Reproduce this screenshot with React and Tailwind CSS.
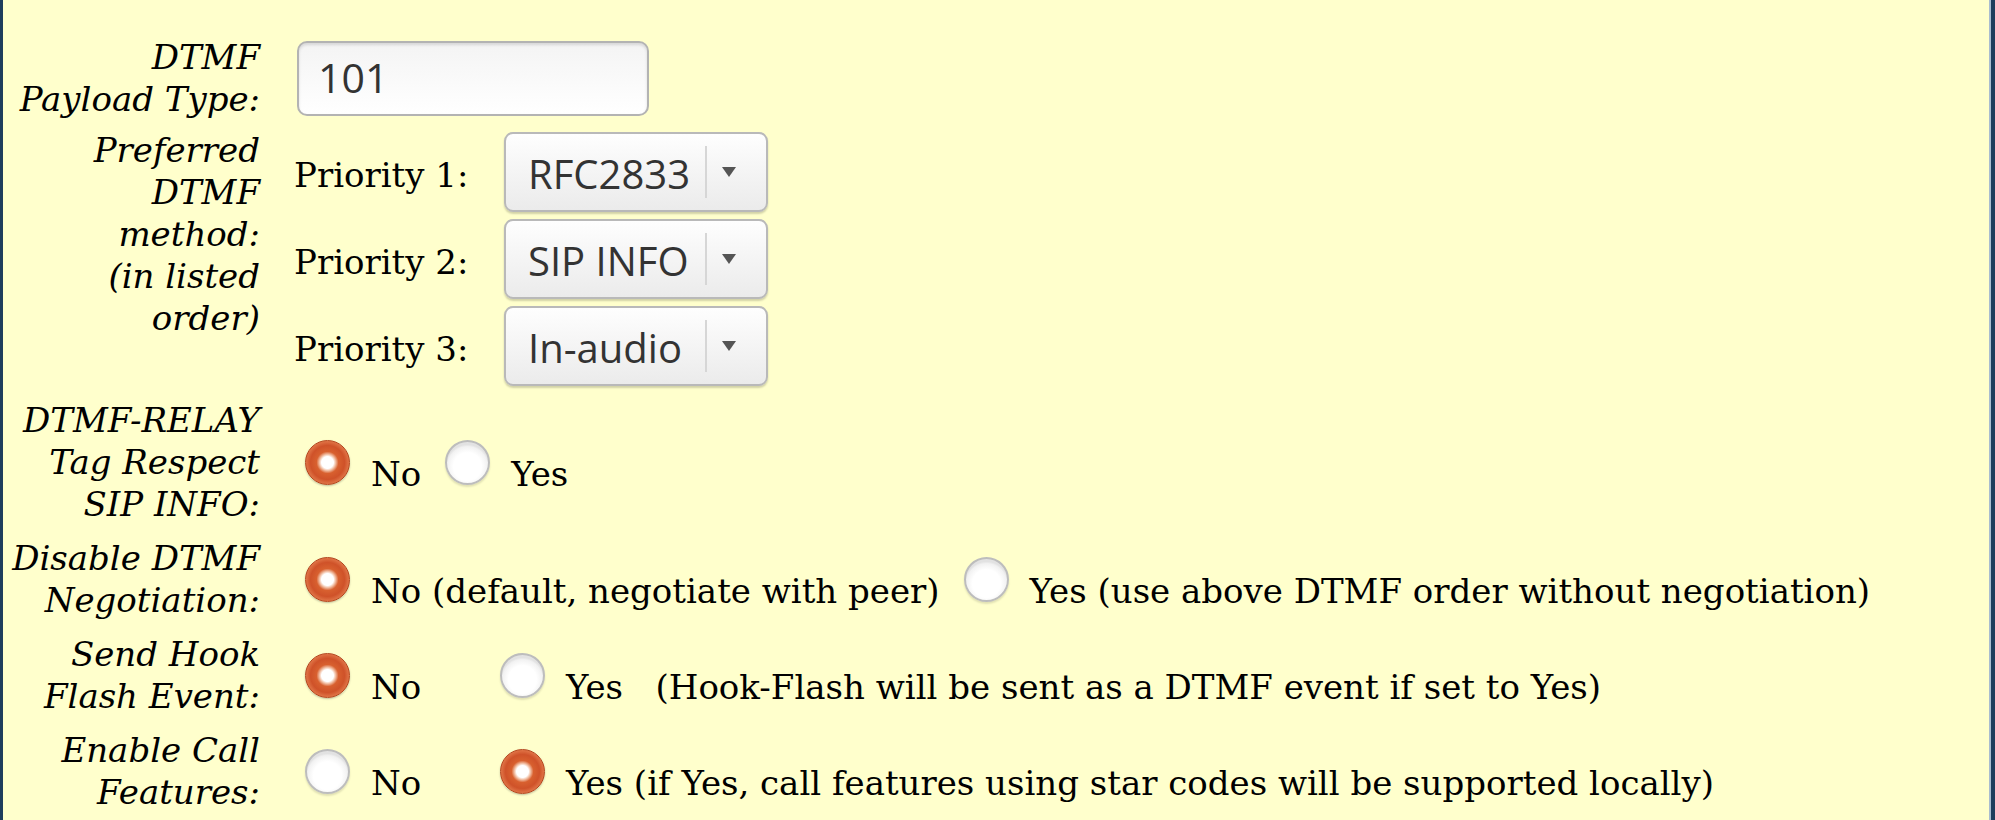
import React from "react";

const serif = { fontFamily: '"DejaVu Serif", serif' };
const sans = { fontFamily: '"Open Sans", "Noto Sans", sans-serif' };

function Radio({ checked }) {
  if (checked) {
    return (
      <span className="relative flex h-[45px] w-[45px] shrink-0 items-center justify-center rounded-full border border-[#b4461f] bg-[radial-gradient(circle_at_50%_50%,#ffffff_0,#ffffff_6px,#f2c2a8_8px,#d8602f_11px,#cf5229_17px,#e2784a_22px)] shadow-[0_1px_2px_rgba(0,0,0,0.25)]" />
    );
  }
  return (
    <span className="flex h-[45px] w-[45px] shrink-0 rounded-full border-2 border-[#bdbdbd] bg-[radial-gradient(circle_at_50%_60%,#ffffff_0,#ffffff_14px,#f2f2f2_20px,#e2e2e2_22px)] shadow-[0_2px_2px_rgba(0,0,0,0.12)]" />
  );
}

function Option({ checked, children, className = "" }) {
  return (
    <div className={"flex items-start " + className}>
      <Radio checked={checked} />
      <span className="ml-[21px] mt-[13px] whitespace-pre text-[34px] leading-[42px] text-black" style={serif}>
        {children}
      </span>
    </div>
  );
}

function Label({ children }) {
  return (
    <div
      className="w-[257px] shrink-0 text-right text-[34px] italic leading-[42px] text-black"
      style={serif}
    >
      {children}
    </div>
  );
}

function Select({ value }) {
  return (
    <div className="flex h-[80px] w-[264px] items-center rounded-[9px] border-2 border-[#b9b9b9] bg-gradient-to-b from-[#fefefe] to-[#ebebeb] shadow-[0_2px_2px_rgba(0,0,0,0.18)]">
      <span className="w-[199px] pl-[22px] pt-[3px] text-[40px] leading-none text-[#333]" style={sans}>
        {value}
      </span>
      <span className="h-[52px] w-[2px] bg-[#d6d6d6]" />
      <span className="ml-[15px] flex items-center">
        <span className="h-0 w-0 border-l-[7px] border-r-[7px] border-t-[10px] border-l-transparent border-r-transparent border-t-[#555]" />
      </span>
    </div>
  );
}

function Priority({ n, value }) {
  return (
    <div className="flex h-[80px] items-center">
      <span className="mt-[5px] w-[210px] text-[34px] leading-[42px] text-black" style={serif}>
        Priority {n}:
      </span>
      <Select value={value} />
    </div>
  );
}

export default function App() {
  return (
    <div className="flex h-[820px] w-[1995px] overflow-hidden border-l-[3px] border-[#1e3d5c] bg-[#ffffcc]">
      <div className="flex flex-1 flex-col pt-[30px]">
        {/* Row 1 */}
        <div className="flex items-center py-[6px]">
          <Label>
            DTMF
            <br />
            Payload Type:
          </Label>
          <div className="ml-[37px]">
            <div
              className="flex h-[75px] w-[352px] items-center rounded-[10px] border-2 border-[#b3b3b3] bg-gradient-to-b from-[#f4f4f4] to-[#ffffff] pl-[19px] text-[41px] text-[#333] shadow-[inset_0_2px_3px_rgba(0,0,0,0.12)]"
              style={sans}
            >
              101
            </div>
          </div>
        </div>

        {/* Row 2 */}
        <div className="flex items-start pb-[7px] pt-[3px]">
          <Label>
            Preferred
            <br />
            DTMF
            <br />
            method:
            <br />
            (in listed
            <br />
            order)
          </Label>
          <div className="ml-[34px] mt-[3px] flex flex-col gap-[7px]">
            <Priority n={1} value="RFC2833" />
            <Priority n={2} value="SIP INFO" />
            <Priority n={3} value="In-audio" />
          </div>
        </div>

        {/* Row 3 */}
        <div className="flex items-center py-[6px]">
          <Label>
            DTMF-RELAY
            <br />
            Tag Respect
            <br />
            SIP INFO:
          </Label>
          <div className="ml-[45px] flex gap-[24px] pt-[10px]">
            <Option checked>No</Option>
            <Option>Yes</Option>
          </div>
        </div>

        {/* Row 4 */}
        <div className="flex items-center py-[6px]">
          <Label>
            Disable DTMF
            <br />
            Negotiation:
          </Label>
          <div className="ml-[45px] flex gap-[24px] pt-[10px]">
            <Option checked>No (default, negotiate with peer)</Option>
            <Option>Yes (use above DTMF order without negotiation)</Option>
          </div>
        </div>

        {/* Row 5 */}
        <div className="flex items-center py-[6px]">
          <Label>
            Send Hook
            <br />
            Flash Event:
          </Label>
          <div className="ml-[45px] flex pt-[10px]">
            <Option checked className="w-[195px]">
              No
            </Option>
            <Option>{"Yes   (Hook-Flash will be sent as a DTMF event if set to Yes)"}</Option>
          </div>
        </div>

        {/* Row 6 */}
        <div className="flex items-center py-[6px]">
          <Label>
            Enable Call
            <br />
            Features:
          </Label>
          <div className="ml-[45px] flex pt-[10px]">
            <Option className="w-[195px]">No</Option>
            <Option checked>Yes (if Yes, call features using star codes will be supported locally)</Option>
          </div>
        </div>
      </div>
      <div className="w-[2px] bg-[#a9bccf]" />
      <div className="w-[4px] bg-[#1e3d5c]" />
    </div>
  );
}
